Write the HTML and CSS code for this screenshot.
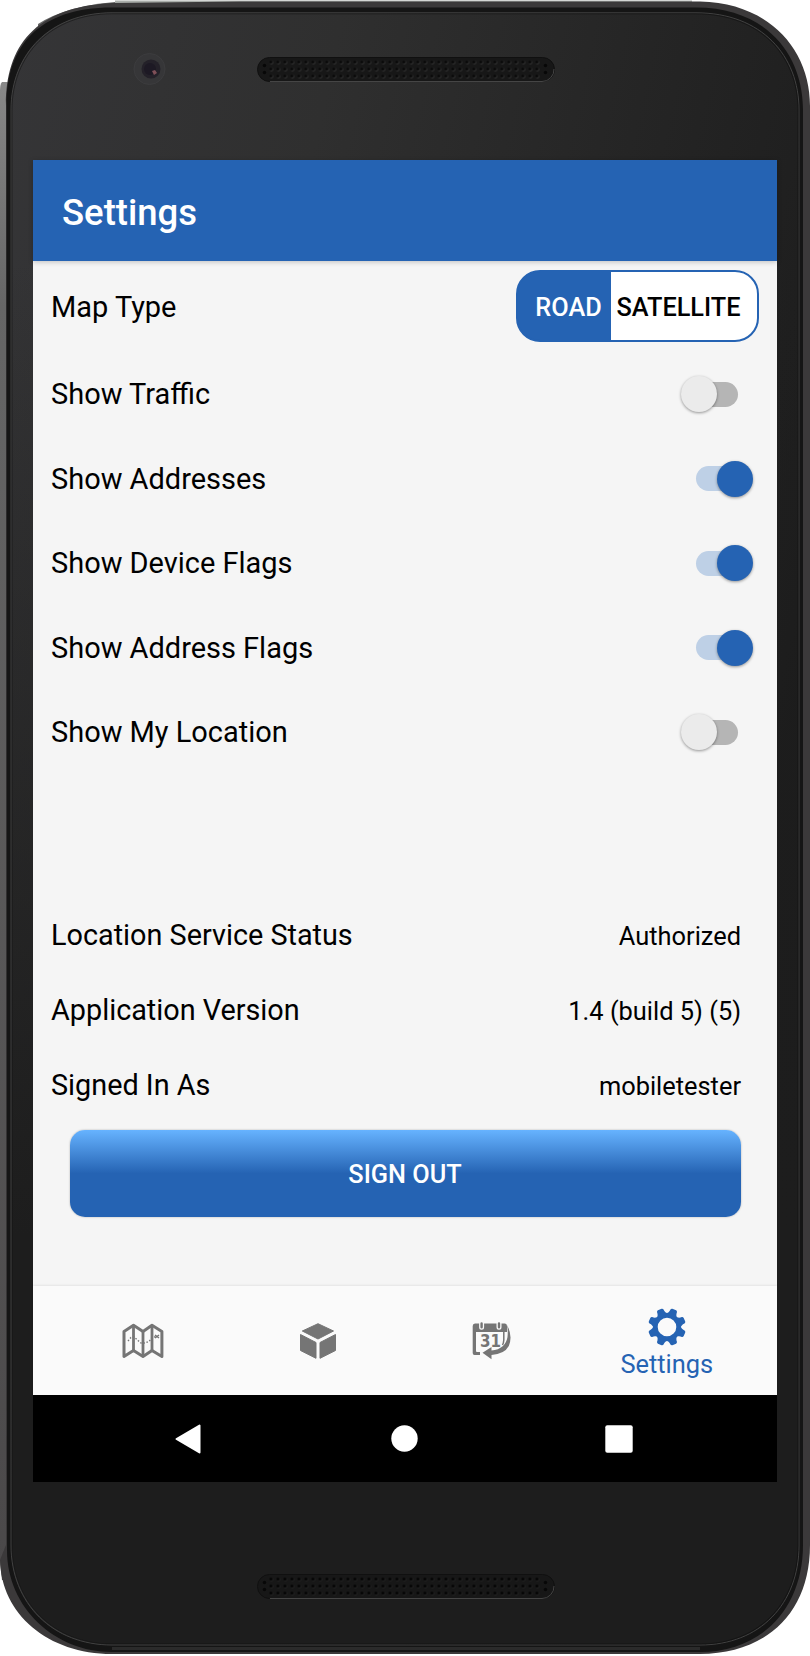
FILE: index.html
```html
<!DOCTYPE html>
<html lang="en">
<head>
<meta charset="utf-8">
<title>Settings</title>
<link rel="stylesheet" href="styles.css">
</head>
<body>
<div class="phone">
  <svg class="shell" viewBox="0 0 810 1656" aria-hidden="true">
    <defs>
      <linearGradient id="face" x1="0" y1="0" x2="1" y2="0.45">
        <stop offset="0" stop-color="#353537"/><stop offset="0.35" stop-color="#2f2f2f"/><stop offset="0.75" stop-color="#232323"/><stop offset="1" stop-color="#1c1c1c"/>
      </linearGradient>
      <linearGradient id="shade" x1="0" y1="0" x2="0" y2="1">
        <stop offset="0.15" stop-color="#1d1d1d" stop-opacity="0"/><stop offset="0.75" stop-color="#1d1d1d"/>
      </linearGradient>
      <linearGradient id="side" x1="0" y1="0" x2="0" y2="1">
        <stop offset="0" stop-color="#888888"/><stop offset="0.15" stop-color="#666666"/><stop offset="1" stop-color="#4a4849"/>
      </linearGradient>
      <pattern id="holes" x="267.5" y="58.5" width="7" height="7" patternUnits="userSpaceOnUse">
        <circle cx="4" cy="4" r="1.7" fill="#414141"/><circle cx="3.5" cy="3.5" r="1.6" fill="#070707"/>
      </pattern>
      <pattern id="holes-dark" x="267.5" y="58.5" width="7" height="7" patternUnits="userSpaceOnUse">
        <circle cx="4" cy="4" r="1.7" fill="#262626"/><circle cx="3.5" cy="3.5" r="1.6" fill="#030303"/>
      </pattern>
      <g id="slot">
        <rect x="257.5" y="57.5" width="297" height="24" rx="12" fill="#171717" stroke="#101010"/>
        <path d="M270 81.500H542A12 12 0 0 0 554 69" fill="none" stroke="#454545"/>
        <g fill="#070707"><circle cx="264.500" cy="65.500" r="1.700"/><circle cx="264.500" cy="72.500" r="1.700"/><circle cx="545.500" cy="65.500" r="1.700"/><circle cx="545.500" cy="72.500" r="1.700"/></g>
      </g>
    </defs>
    <path d="M2 82H12V1580H2L0 1560V90Q0 84 2 82Z" fill="url(#side)"/>
    <path d="M38 24Q66 6 115 2V12L38 32Z" fill="#666666"/>
    <path d="M115 0.500H692V4H115Z" fill="#aaaeaa"/>
    <path d="M6 105C6 46 35 7 112 3L240 1.500H700C770 3 810 50 810 106V1545C810 1615 764 1654 700 1654H112C48 1654 1 1614 0 1560L6 1545Z" fill="#3b393a"/>
    <path d="M6.500 105C6.500 47 38 7.500 112 7.500H696C764 7.500 803 52 803 110V1545C803 1608 762 1652 700 1652H112C55 1652 7 1608 7 1550Z" fill="#151515"/>
    <path d="M11 110C11 54 50 12.800 112 12.800H696C762 12.800 799 56 799 110V1545C799 1604 760 1645 700 1645H112C53 1645 11 1604 11 1545Z" fill="url(#face)" stroke="#414141"/>
    <path d="M12 110C12 55 51 13.800 112 13.800H696C761 13.800 798 57 798 110V1545C798 1603 759 1644 700 1644H112C54 1644 12 1603 12 1545Z" fill="url(#shade)" stroke="#090909" stroke-opacity="0.45"/>
    <path d="M112 1648.500H700" stroke="#2b2b2b" stroke-width="3"/>
    <circle cx="149.500" cy="69" r="15.500" fill="#363638" stroke="#3c3c3e"/>
    <circle cx="151" cy="69" r="9.500" fill="#242129"/>
    <circle cx="150" cy="69" r="6" fill="#1d1924"/>
    <path d="M152 71L155 70 157 73 154 75Z" fill="#805058"/>
    <use href="#slot"/>
    <rect x="267.500" y="58.500" width="273" height="21" fill="url(#holes)"/>
    <g transform="translate(0 1517)">
      <use href="#slot"/>
      <rect x="267.500" y="58.500" width="273" height="21" fill="url(#holes-dark)"/>
    </g>
  </svg>

  <div class="screen">
    <header class="bar"><h1>Settings</h1></header>
    <main class="content">
      <div class="row row-map">
        <span class="label">Map Type</span>
        <div class="segment"><span class="seg on">ROAD</span><span class="seg">SATELLITE</span></div>
      </div>
      <div class="row"><span class="label">Show Traffic</span><span class="switch"><i></i></span></div>
      <div class="row"><span class="label">Show Addresses</span><span class="switch checked"><i></i></span></div>
      <div class="row"><span class="label">Show Device Flags</span><span class="switch checked"><i></i></span></div>
      <div class="row"><span class="label">Show Address Flags</span><span class="switch checked"><i></i></span></div>
      <div class="row"><span class="label">Show My Location</span><span class="switch"><i></i></span></div>
      <section class="info">
        <div class="info-row"><span class="label">Location Service Status</span><span class="value">Authorized</span></div>
        <div class="info-row"><span class="label">Application Version</span><span class="value">1.4 (build 5) (5)</span></div>
        <div class="info-row"><span class="label">Signed In As</span><span class="value">mobiletester</span></div>
      </section>
      <button class="signout">SIGN OUT</button>
    </main>
    <nav class="tabs">
      <span class="tab">
        <svg width="42" height="36" viewBox="0 0 42 36" fill="none" stroke="#757575" stroke-linejoin="round">
          <path d="M2 8.500L11.500 2.300 21 8.500 30 2.300 39.900 8.500V33.500L30 27.500 21 33.500 11.500 27.500 2 33.500Z" stroke-width="3"/>
          <path d="M11.500 2V28M21 8V33M30 2V28" stroke-width="2.800"/>
          <path d="M6 18L9 14.500 12 14 16 17.500 19 20 23 20 27 18.500 30 15 34 13.500" stroke-width="1.400" stroke-dasharray="1.500 1.700"/>
          <path d="M33 12L37 15M37 12L33 15" stroke-width="1.500"/>
        </svg>
      </span>
      <span class="tab">
        <svg width="38" height="38" viewBox="0 0 38 38" fill="#757575" stroke="#757575" stroke-linejoin="round">
          <path d="M3.300 9L19 1.700 34.500 9 19 17Z"/><path d="M1.500 12.500L17 20.500V36.300L1.500 28.500ZM36.500 12.500L21 20.500V36.300L36.500 28.500Z"/>
        </svg>
      </span>
      <span class="tab">
        <svg width="40" height="38" viewBox="0 0 40 38">
          <path d="M3 1.500H33Q35 1.500 35 4V10H4V29Q4 30 5 30H8V33H2.500Q.7 33 .7 31V4Q.7 1.500 3 1.500Z" fill="#757575"/>
          <path d="M31.800 9V18Q31.600 21 30.500 23" fill="none" stroke="#757575" stroke-width="1.500"/>
          <path d="M9.600 1.500V5.300M27 1.500V5.300" stroke="#fafafa" stroke-width="5" stroke-linecap="round"/>
          <path d="M9.600 1.500V5.300M27 1.500V5.300" stroke="#757575" stroke-width="2.400" stroke-linecap="round"/>
          <path d="M35 3Q41 14 36.800 24 32.500 32 19.500 33V37.300L10.500 30.800 19.500 25V28.500C29 28 34.500 22 35.500 15 36 10 35.800 6 35 3Z" fill="#757575"/>
          <text x="8" y="25" class="date" textLength="21" lengthAdjust="spacingAndGlyphs">31</text>
        </svg>
      </span>
      <span class="tab active">
        <svg width="38" height="38" viewBox="-19 -19 38 38">
          <defs><path id="tooth" d="M-6.800 -11.500C-4.200 -13.500 -3.600 -15 -3.500 -17.500Q-3.300 -18.700 -2 -18.900H2Q3.300 -18.700 3.500 -17.500C3.600 -15 4.200 -13.500 6.800 -11.500Z"/></defs>
          <g fill="#2563b3">
            <path fill-rule="evenodd" d="M-13.800 0A13.800 13.800 0 1 0 13.800 0 13.800 13.800 0 1 0-13.800 0ZM-9.300 0A9.300 9.300 0 1 1 9.300 0 9.300 9.300 0 1 1-9.300 0Z"/>
            <use href="#tooth" transform="rotate(22.500)"/><use href="#tooth" transform="rotate(67.500)"/><use href="#tooth" transform="rotate(112.500)"/><use href="#tooth" transform="rotate(157.500)"/><use href="#tooth" transform="rotate(202.500)"/><use href="#tooth" transform="rotate(247.500)"/><use href="#tooth" transform="rotate(292.500)"/><use href="#tooth" transform="rotate(337.500)"/>
          </g>
        </svg>
        <span class="tab-label">Settings</span>
      </span>
    </nav>
    <div class="system">
      <svg width="26" height="30" viewBox="0 0 26 30"><path d="M1.500 15L24.500 1.500V28.500Z" fill="#fff" stroke="#fff" stroke-width="2" stroke-linejoin="round"/></svg>
      <svg class="home" width="27" height="27" viewBox="0 0 27 27"><circle cx="13.500" cy="13.500" r="13.200" fill="#fff"/></svg>
      <svg width="28" height="28" viewBox="0 0 28 28"><rect x=".3" y=".3" width="27.400" height="27.400" rx="2" fill="#fff"/></svg>
    </div>
  </div>
</div>
</body>
</html>
```
FILE: styles.css
```css
* { box-sizing: border-box; }
body { margin: 0; background: #fff; font-family: Roboto, sans-serif; color: #000; }
.phone { position: relative; width: 810px; height: 1656px; padding: 160px 33px 174px; overflow: hidden; }
.shell { position: absolute; inset: 0; width: 810px; height: 1656px; }
.screen { position: relative; width: 744px; height: 1322px; display: flex; flex-direction: column; background: #f5f5f5; }
.bar { position: relative; height: 101px; flex: none; background: #2563b3; color: #fff; display: flex; align-items: center; padding: 4px 0 0 29px; box-shadow: 0 1px 5px rgba(0,0,0,.22); }
.bar h1 { margin: 0; font-size: 36.500px; font-weight: 500; }
.content { flex: 1; display: flex; flex-direction: column; padding-top: 5px; }
.row { height: 84.600px; flex: none; display: flex; align-items: center; justify-content: space-between; padding: 0 24.500px 0 18px; }
.row-map { height: 85.800px; padding: 0 18px 3px; }
.label { font-size: 28.960px; white-space: nowrap; }
.segment { width: 243px; height: 72px; margin-top: -3px; border: 2px solid #2563b3; border-radius: 24px; overflow: hidden; background: linear-gradient(90deg, #2563b3 93px, #fff 93px) border-box; display: flex; align-items: center; font-size: 25.300px; font-weight: 500; }
.seg { height: 100%; flex: 1; display: flex; align-items: center; justify-content: center; padding: 3px 11px 0 0; }
.seg.on { flex: none; width: 93px; padding: 3px 0 0 8px; color: #fff; background: #2563b3; }
.switch { position: relative; width: 57px; height: 36px; margin-right: 14.500px; display: flex; align-items: center; justify-content: flex-end; }
.switch::before { content: ""; width: 44px; height: 25px; border-radius: 13px; background: #b5b5b5; }
.switch i { position: absolute; left: 0; top: 0; width: 36px; height: 36px; border-radius: 50%; background: #ebebeb; box-shadow: 0 1px 3px rgba(0,0,0,.4); }
.switch.checked { margin-right: 0; justify-content: flex-start; }
.switch.checked::before { background: #bed0e6; }
.switch.checked i { left: auto; right: 0; background: #2563b3; }
.info { margin-top: 122.200px; }
.info .label { font-size: 28.800px; padding-top: 2px; }
.info-row { height: 75px; display: flex; align-items: center; justify-content: space-between; padding: 0 36px 0 18px; }
.value { font-size: 25.400px; padding-top: 3px; }
.signout { width: 671px; height: 87px; margin: 8px 0 0 36.500px; border: 0; border-radius: 15px; padding: 2px 0 0; background: linear-gradient(#66b3ff, #2563b3 50%); color: #fff; font: 500 25.300px Roboto, sans-serif; box-shadow: 0 0 2px rgba(0,0,0,.3); }
.tabs { height: 109px; flex: none; display: flex; padding: 0 23px; background: #fafafa; box-shadow: 0 -1px 2px rgba(0,0,0,.07); }
.tab { flex: 1; display: flex; flex-direction: column; align-items: center; justify-content: center; }
.tab svg { display: block; }
.tab.active { justify-content: flex-start; padding-top: 22px; }
.tab-label { font-size: 25.400px; line-height: 30px; margin-top: 3px; color: #2563b3; }
.date { font: 700 17.500px "DejaVu Sans", sans-serif; fill: #757575; }
.system { height: 87px; flex: none; display: flex; align-items: center; justify-content: space-between; padding: 0 144px 0 142px; background: #000; }
.home { margin-left: 3px; }
```
